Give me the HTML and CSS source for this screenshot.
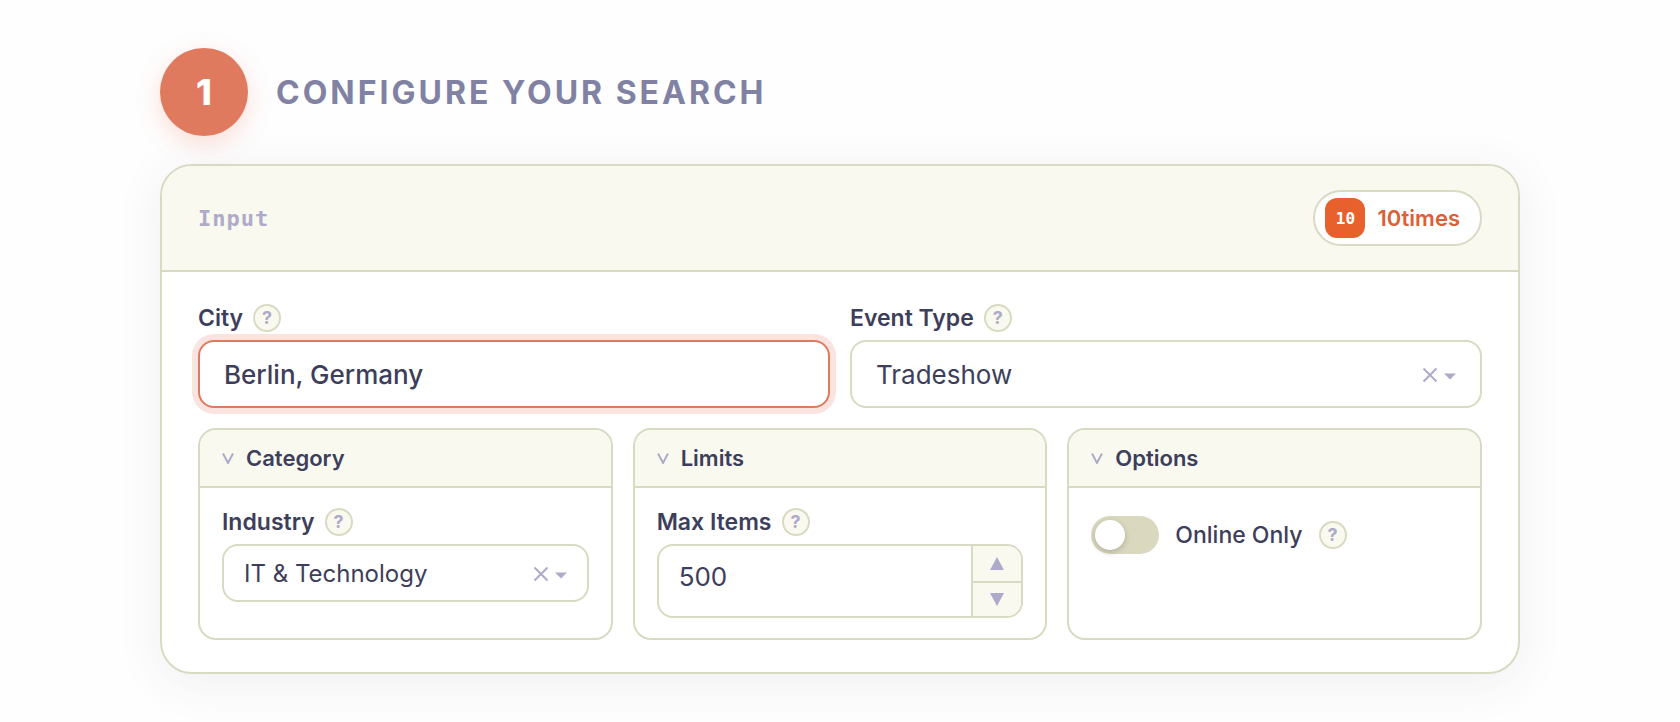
FILE: index.html
```html
<!DOCTYPE html>
<html lang="en">
<head>
<meta charset="utf-8">
<meta name="viewport" content="width=device-width, initial-scale=1">
<title>Configure your search</title>
<link rel="stylesheet" href="styles.css">
</head>
<body>
<main class="page">
  <header class="step">
    <span class="step-number">1</span>
    <h1 class="step-title">Configure your search</h1>
  </header>

  <section class="card">
    <div class="card-header">
      <span class="card-kind">Input</span>
      <a class="source" href="#"><span class="source-logo">10</span><span>10times</span></a>
    </div>

    <form class="card-body">
      <div class="row">
        <div class="field">
          <div class="label-row">
            <label for="city">City</label>
            <button class="help" type="button" aria-label="About city">?</button>
          </div>
          <input class="control text-input is-active" id="city" type="text" value="Berlin, Germany">
        </div>
        <div class="field">
          <div class="label-row">
            <label for="event-type">Event Type</label>
            <button class="help" type="button" aria-label="About event type">?</button>
          </div>
          <div class="control picker">
            <select id="event-type"><option>Tradeshow</option><option>Conference</option></select>
            <button class="clear" type="button" aria-label="Clear event type"><svg width="16" height="16" viewBox="0 0 16 16"><path d="M1.5 1.5l13 13M14.5 1.5l-13 13"/></svg></button>
            <svg class="caret" width="12" height="7" viewBox="0 0 12 7"><path d="M0 0.5h12L6 6.5z"/></svg>
          </div>
        </div>
      </div>

      <div class="groups">
        <section class="group">
          <h2 class="group-title"><svg class="chevron" width="12" height="11" viewBox="0 0 12 11"><path d="M1 0.5l5 9.5 5-9.5"/></svg>Category</h2>
          <div class="group-body">
            <div class="label-row">
              <label for="industry">Industry</label>
              <button class="help" type="button" aria-label="About industry">?</button>
            </div>
            <div class="control picker picker-small">
              <select id="industry"><option>IT &amp; Technology</option><option>Finance</option></select>
              <button class="clear" type="button" aria-label="Clear industry"><svg width="16" height="16" viewBox="0 0 16 16"><path d="M1.5 1.5l13 13M14.5 1.5l-13 13"/></svg></button>
              <svg class="caret" width="12" height="7" viewBox="0 0 12 7"><path d="M0 0.5h12L6 6.5z"/></svg>
            </div>
          </div>
        </section>

        <section class="group">
          <h2 class="group-title"><svg class="chevron" width="12" height="11" viewBox="0 0 12 11"><path d="M1 0.5l5 9.5 5-9.5"/></svg>Limits</h2>
          <div class="group-body">
            <div class="label-row">
              <label for="max-items">Max Items</label>
              <button class="help" type="button" aria-label="About max items">?</button>
            </div>
            <div class="control stepper">
              <input id="max-items" type="number" value="500">
              <div class="stepper-buttons">
                <button type="button" aria-label="Increase"><svg width="14" height="13" viewBox="0 0 14 13"><path d="M7 0l7 13H0z"/></svg></button>
                <button type="button" aria-label="Decrease"><svg width="14" height="13" viewBox="0 0 14 13"><path d="M0 0h14L7 13z"/></svg></button>
              </div>
            </div>
          </div>
        </section>

        <section class="group">
          <h2 class="group-title"><svg class="chevron" width="12" height="11" viewBox="0 0 12 11"><path d="M1 0.5l5 9.5 5-9.5"/></svg>Options</h2>
          <div class="group-body">
            <div class="toggle-row">
              <input class="toggle" id="online-only" type="checkbox" role="switch">
              <label for="online-only">Online Only</label>
              <button class="help" type="button" aria-label="About online only">?</button>
            </div>
          </div>
        </section>
      </div>
    </form>
  </section>
</main>
</body>
</html>
```
FILE: styles.css
```css
:root {
  --ink: #3d3e5b;
  --heading: #8182a3;
  --muted: #adabc9;
  --line: #d9dac2;
  --cream: #f9f9f0;
  --accent: #e07a5f;
  --brand: #e8612c;
}

* { box-sizing: border-box; }

body {
  margin: 0;
  background: #fefefe;
  color: var(--ink);
  font-family: Inter, "Liberation Sans", sans-serif;
}

button, input, select {
  margin: 0;
  padding: 0;
  border: 0;
  background: none;
  color: inherit;
  font: inherit;
  outline: 0;
}

button { cursor: pointer; }

.page {
  max-width: 1424px;
  margin: 0 auto;
  padding: 48px 32px;
}

.step {
  display: flex;
  align-items: center;
  gap: 28px;
  margin-bottom: 28px;
}

.step-number {
  display: grid;
  place-items: center;
  width: 88px;
  height: 88px;
  border-radius: 50%;
  background: var(--accent);
  box-shadow: 0 8px 24px rgba(240, 122, 95, 0.25);
  color: #fff;
  font-size: 36px;
  font-weight: 800;
}

.step-title {
  margin: 0;
  color: var(--heading);
  font-size: 32px;
  font-weight: 700;
  letter-spacing: 3px;
  text-transform: uppercase;
}

.card {
  border: 2px solid var(--line);
  border-radius: 32px;
  background: #fff;
  box-shadow: 0 8px 48px rgba(61, 64, 91, 0.08);
}

.card-header {
  display: flex;
  align-items: center;
  justify-content: space-between;
  padding: 24px 36px;
  border-bottom: 2px solid var(--line);
  border-radius: 30px 30px 0 0;
  background: var(--cream);
}

.card-kind {
  color: var(--muted);
  font-family: "DejaVu Sans Mono", "Liberation Mono", monospace;
  font-size: 22px;
  font-weight: 700;
  letter-spacing: 1px;
}

.source {
  display: flex;
  align-items: center;
  gap: 12px;
  padding: 6px 20px 6px 10px;
  border: 2px solid var(--line);
  border-radius: 28px;
  background: #fff;
  color: #dc6036;
  font-size: 22px;
  font-weight: 600;
  text-decoration: none;
}

.source-logo {
  display: grid;
  place-items: center;
  width: 40px;
  height: 40px;
  border-radius: 12px;
  background: var(--brand);
  color: #fff;
  font-family: "DejaVu Sans Mono", "Liberation Mono", monospace;
  font-size: 16px;
  font-weight: 700;
}

.card-body { padding: 32px 36px; }

.row, .groups {
  display: grid;
  grid-template-columns: repeat(2, minmax(0, 1fr));
  gap: 20px;
}

.groups {
  grid-template-columns: repeat(3, minmax(0, 1fr));
  margin-top: 20px;
}

.label-row {
  display: flex;
  align-items: center;
  gap: 10px;
  height: 28px;
  margin-bottom: 8px;
  font-size: 23px;
  font-weight: 600;
}

.help {
  display: grid;
  place-items: center;
  width: 28px;
  height: 28px;
  border: 2px solid var(--line);
  border-radius: 50%;
  background: var(--cream);
  color: var(--muted);
  font-size: 18px;
  font-weight: 700;
  line-height: 24px;
}

.control {
  width: 100%;
  height: 68px;
  border: 2px solid var(--line);
  border-radius: 16px;
  background: #fff;
  font-size: 26px;
}

.text-input {
  padding: 0 24px;
  font-weight: 500;
}

.is-active {
  border-color: var(--accent);
  box-shadow: 0 0 0 6px rgba(224, 122, 95, 0.2);
}

.picker {
  display: flex;
  align-items: center;
  padding: 0 24px;
}

.picker select {
  flex: 1;
  min-width: 0;
  height: 100%;
  appearance: none;
}

.picker-small {
  height: 58px;
  padding: 0 20px;
  font-size: 24px;
}

.clear {
  display: grid;
  place-items: center;
  margin: 2px 6px 0 0;
}

.clear path, .chevron path {
  fill: none;
  stroke: var(--muted);
  stroke-width: 2;
}

.caret, .stepper-buttons svg { fill: var(--muted); }

.caret { margin-top: 4px; }

.group {
  border: 2px solid var(--line);
  border-radius: 18px;
}

.group-title {
  display: flex;
  align-items: center;
  gap: 12px;
  height: 58px;
  margin: 0;
  padding: 0 22px;
  border-bottom: 2px solid var(--line);
  border-radius: 16px 16px 0 0;
  background: var(--cream);
  font-size: 22px;
  font-weight: 600;
}

.group-body { padding: 20px 22px; }

.stepper {
  display: flex;
  height: 74px;
  overflow: hidden;
}

.stepper input {
  flex: 1;
  min-width: 0;
  padding: 0 20px 10px;
  appearance: textfield;
}

.stepper input::-webkit-inner-spin-button { appearance: none; }

.stepper-buttons {
  display: grid;
  grid-template-rows: 1fr 1fr;
  width: 50px;
  border-left: 2px solid var(--line);
  background: var(--cream);
}

.stepper-buttons button {
  display: grid;
  place-items: center;
}

.stepper-buttons button + button { border-top: 2px solid var(--line); }

.toggle-row {
  display: flex;
  align-items: center;
  gap: 16px;
  padding: 8px 0;
  font-size: 23px;
  font-weight: 500;
}

.toggle {
  width: 68px;
  height: 38px;
  padding: 4px;
  border-radius: 19px;
  background: #dbd8c0;
  appearance: none;
}

.toggle::before {
  content: "";
  display: block;
  width: 30px;
  height: 30px;
  border-radius: 50%;
  background: #fff;
  box-shadow: 0 2px 6px rgba(0, 0, 0, 0.2);
}

.toggle:checked { background: var(--accent); }

.toggle:checked::before { margin-left: auto; }
```
